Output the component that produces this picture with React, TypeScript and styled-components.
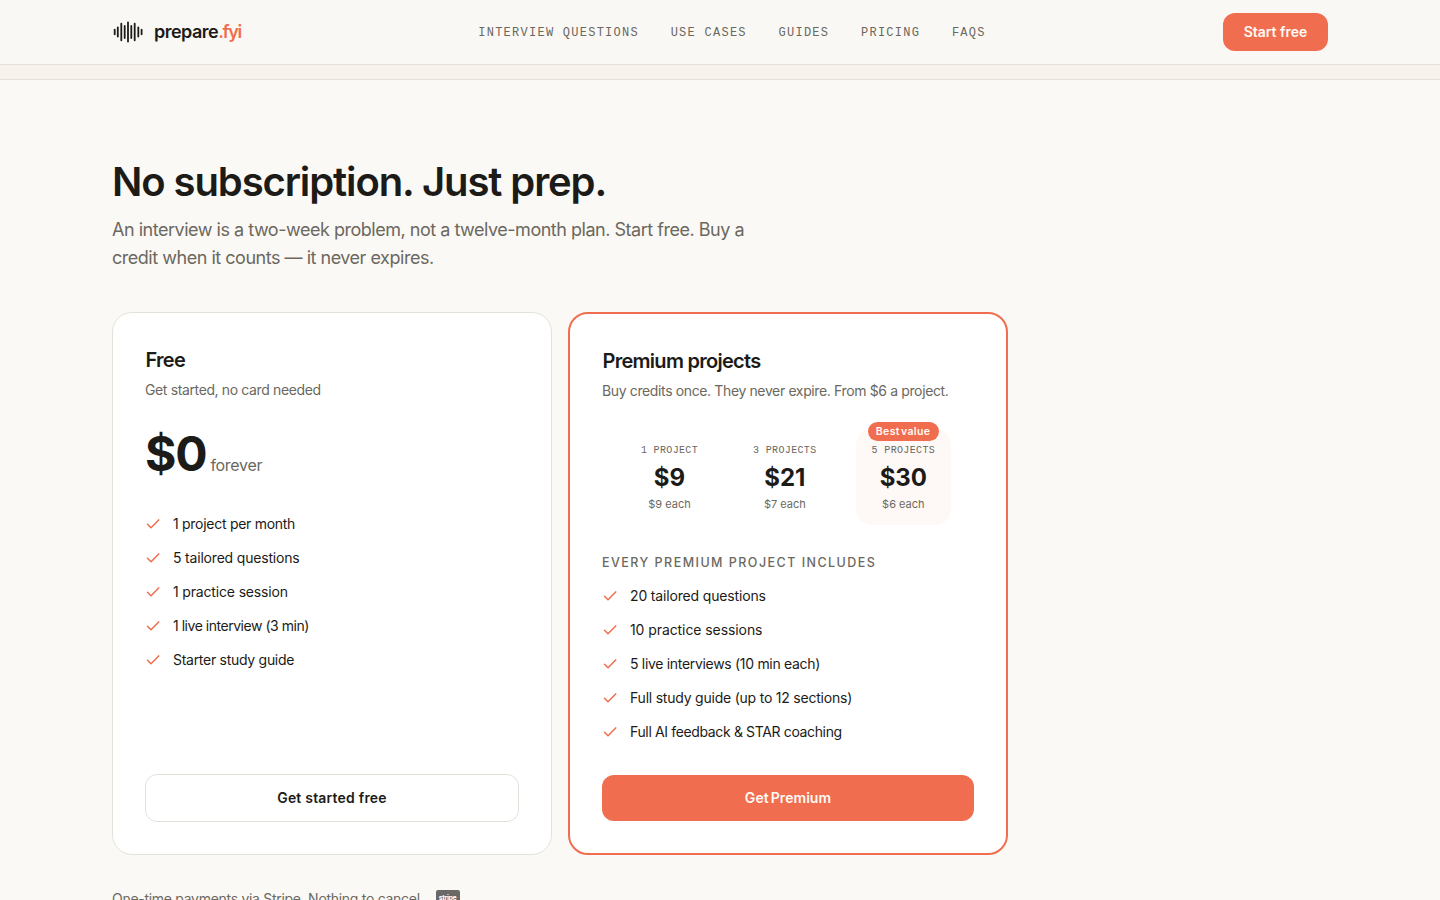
import React from "react";
import styled, { createGlobalStyle } from "styled-components";

const coral = "#f06e4f";
const ink = "#1c1b18";
const muted = "#6b6860";
const line = "#e3e2da";

const GlobalStyle = createGlobalStyle`
  * { box-sizing: border-box; }
  html, body { margin: 0; height: 900px; overflow: hidden; }
  body { background: #fbf9f5; color: ${ink}; font-family: Inter, "Liberation Sans", sans-serif; }
  h1, h2, p, ul { margin: 0; padding: 0; }
  button { font-family: inherit; margin: 0; padding: 0; }
`;

const Header = styled.header`
  height: 65px;
  border-bottom: 1px solid ${line};
  background: #faf8f4;
  padding: 0 112px;
  display: flex;
  justify-content: space-between;
  align-items: center;
`;
const Brand = styled.a`
  display: flex;
  align-items: center;
  gap: 10px;
`;
const BrandName = styled.span`
  font-size: 18px;
  font-weight: 600;
  line-height: 28px;
  letter-spacing: -0.52px;
  white-space: nowrap;
  em { font-style: normal; letter-spacing: -1.3px; color: ${coral}; }
`;
const Nav = styled.nav`
  display: flex;
  gap: 31.7px;
  padding-top: 2px;
`;
const NavLink = styled.a`
  font-family: "Liberation Mono", monospace;
  font-size: 12px;
  line-height: 16px;
  letter-spacing: 1.26px;
  color: ${muted};
  white-space: nowrap;
`;
const StartButton = styled.button`
  width: 105px;
  height: 38px;
  border: 0;
  border-radius: 12px;
  background: ${coral};
  color: #fffaf5;
  font-size: 14px;
  font-weight: 600;
  padding-bottom: 2px;
`;
const Strip = styled.div`
  height: 15px;
  border-bottom: 1px solid ${line};
  background: #f7f3ec;
`;
const Main = styled.main`
  padding: 78px 112px 0;
`;
const Title = styled.h1`
  font-size: 40px;
  font-weight: 600;
  line-height: 48px;
  letter-spacing: -1.1px;
`;
const Lead = styled.p`
  width: 672px;
  margin-top: 10px;
  font-size: 18px;
  line-height: 28px;
  letter-spacing: -0.48px;
  color: ${muted};
`;
const Plans = styled.section`
  width: 896px;
  margin-top: 40px;
  display: grid;
  grid-template-columns: 1fr 1fr;
  gap: 16px;
`;
const Card = styled.article<{ $featured?: boolean }>`
  height: 543px;
  border: ${(p) => (p.$featured ? `2px solid ${coral}` : `1px solid ${line}`)};
  border-radius: 20px;
  background: #fff;
  padding: 32px;
  display: flex;
  flex-direction: column;
`;
const PlanName = styled.h2`
  font-size: 20px;
  font-weight: 600;
  line-height: 30px;
  letter-spacing: -0.72px;
  padding-left: 0.5px;
`;
const PlanNote = styled.p`
  margin-top: 5px;
  font-size: 14px;
  line-height: 20px;
  letter-spacing: -0.37px;
  color: ${muted};
  white-space: nowrap;
`;
const Price = styled.div`
  margin-top: 28px;
  height: 52px;
  display: flex;
  align-items: baseline;
  gap: 4px;
  strong { font-size: 48px; font-weight: 700; line-height: 52px; letter-spacing: -1.2px; }
  span { font-size: 16px; letter-spacing: -0.3px; color: ${muted}; margin-bottom: 1px; }
`;
const Packs = styled.div`
  margin-top: 28px;
  display: flex;
  justify-content: center;
  gap: 23px;
`;
const Pack = styled.div<{ $best?: boolean }>`
  position: relative;
  height: 96px;
  border-radius: 16px;
  background: ${(p) => (p.$best ? "#fef8f6" : "transparent")};
  padding: 14px 16px 0;
  display: flex;
  flex-direction: column;
  align-items: center;
`;
const PackSize = styled.span`
  font-family: "Liberation Mono", monospace;
  font-size: 10px;
  line-height: 16px;
  letter-spacing: 0.35px;
  color: ${muted};
  white-space: nowrap;
`;
const PackPrice = styled.strong`
  margin-top: 3px;
  font-size: 24px;
  line-height: 32px;
  font-weight: 700;
`;
const PackEach = styled.span`
  margin-top: 2px;
  font-size: 11px;
  line-height: 16px;
  color: ${muted};
`;
const BestBadge = styled.span`
  position: absolute;
  top: -7px;
  left: 12px;
  width: 71px;
  height: 19px;
  border-radius: 10px;
  background: ${coral};
  color: #fffaf5;
  font-size: 10.5px;
  font-weight: 600;
  line-height: 19px;
  letter-spacing: 0.4px;
  word-spacing: -2px;
  text-align: center;
  white-space: nowrap;
`;
const IncludesLabel = styled.p`
  margin-top: 28px;
  font-size: 12.5px;
  font-weight: 500;
  line-height: 20px;
  letter-spacing: 1.47px;
  color: ${muted};
  white-space: nowrap;
`;
const Features = styled.ul<{ $top: number }>`
  list-style: none;
  margin-top: ${(p) => p.$top}px;
  display: grid;
  gap: 14px;
`;
const Feature = styled.li<{ $tracking: number }>`
  display: flex;
  align-items: center;
  gap: 12px;
  height: 20px;
  font-size: 14px;
  line-height: 20px;
  letter-spacing: ${(p) => p.$tracking}px;
  white-space: nowrap;
`;
const PlanButton = styled.button<{ $solid?: boolean }>`
  margin-top: auto;
  height: ${(p) => (p.$solid ? 46 : 48)}px;
  border: ${(p) => (p.$solid ? "0" : `1px solid ${line}`)};
  border-radius: 12px;
  background: ${(p) => (p.$solid ? coral : "#fff")};
  color: ${(p) => (p.$solid ? "#fffaf5" : ink)};
  font-size: 14px;
  font-weight: 600;
  letter-spacing: ${(p) => (p.$solid ? 0.05 : 0.2)}px;
  word-spacing: ${(p) => (p.$solid ? -1.5 : 0)}px;
  padding-bottom: 2px;
`;
const Footnote = styled.p`
  margin-top: 33px;
  display: flex;
  align-items: center;
  gap: 12px;
  font-size: 14px;
  line-height: 22px;
  letter-spacing: -0.29px;
  color: ${muted};
`;
const StripeMark = styled.span`
  width: 24px;
  height: 18px;
  border-radius: 2px;
  background: #6b6868;
  color: #fff;
  font-size: 7px;
  font-weight: 700;
  line-height: 16px;
  letter-spacing: -0.4px;
  text-align: center;
`;

const bars = [
  [2.7, 4.5], [5.8, 9], [9.3, 16.5], [12.7, 12], [16, 19],
  [19.3, 12], [22.7, 16.5], [26.3, 9], [29.6, 4.5],
];

const Waveform = () => (
  <svg width="32" height="24" viewBox="0 0 32 24" stroke={ink} strokeWidth="1.8" strokeLinecap="round">
    {bars.map(([x, h]) => (
      <line key={x} x1={x} x2={x} y1={12 - h / 2} y2={12 + h / 2} />
    ))}
  </svg>
);

const Check = () => (
  <svg width="16" height="16" viewBox="0 0 16 16" fill="none" stroke={coral} strokeWidth="1.5" strokeLinecap="round" strokeLinejoin="round">
    <path d="M2.5 8.3L6 11.8L13.7 3.9" />
  </svg>
);

type Item = [label: string, tracking: number];

const FeatureList = ({ items, top }: { items: Item[]; top: number }) => (
  <Features $top={top}>
    {items.map(([label, tracking]) => (
      <Feature key={label} $tracking={tracking}>
        <Check />
        {label}
      </Feature>
    ))}
  </Features>
);

const navItems = ["INTERVIEW QUESTIONS", "USE CASES", "GUIDES", "PRICING", "FAQS"];
const freeFeatures: Item[] = [
  ["1 project per month", -0.28],
  ["5 tailored questions", -0.19],
  ["1 practice session", -0.16],
  ["1 live interview (3 min)", -0.47],
  ["Starter study guide", -0.28],
];
const premiumFeatures: Item[] = [
  ["20 tailored questions", -0.16],
  ["10 practice sessions", -0.08],
  ["5 live interviews (10 min each)", -0.31],
  ["Full study guide (up to 12 sections)", -0.22],
  ["Full AI feedback & STAR coaching", -0.36],
];
const packs = [
  { size: "1 PROJECT", price: "$9", each: "$9 each" },
  { size: "3 PROJECTS", price: "$21", each: "$7 each" },
  { size: "5 PROJECTS", price: "$30", each: "$6 each", best: true },
];

export default function App() {
  return (
    <>
      <GlobalStyle />
      <Header>
        <Brand>
          <Waveform />
          <BrandName>prepare<em>.fyi</em></BrandName>
        </Brand>
        <Nav>{navItems.map((n) => <NavLink key={n}>{n}</NavLink>)}</Nav>
        <StartButton>Start free</StartButton>
      </Header>
      <Strip />
      <Main>
        <Title>No subscription. Just prep.</Title>
        <Lead>
          An interview is a two-week problem, not a twelve-month plan. Start free. Buy a<br />
          credit when it counts — it never expires.
        </Lead>
        <Plans>
          <Card>
            <PlanName>Free</PlanName>
            <PlanNote>Get started, no card needed</PlanNote>
            <Price><strong>$0</strong><span>forever</span></Price>
            <FeatureList top={34} items={freeFeatures} />
            <PlanButton>Get started free</PlanButton>
          </Card>
          <Card $featured>
            <PlanName>Premium projects</PlanName>
            <PlanNote>Buy credits once. They never expire. From $6 a project.</PlanNote>
            <Packs>
              {packs.map((p) => (
                <Pack key={p.size} $best={p.best}>
                  {p.best && <BestBadge>Best value</BestBadge>}
                  <PackSize>{p.size}</PackSize>
                  <PackPrice>{p.price}</PackPrice>
                  <PackEach>{p.each}</PackEach>
                </Pack>
              ))}
            </Packs>
            <IncludesLabel>EVERY PREMIUM PROJECT INCLUDES</IncludesLabel>
            <FeatureList top={13} items={premiumFeatures} />
            <PlanButton $solid>Get Premium</PlanButton>
          </Card>
        </Plans>
        <Footnote>One-time payments via Stripe. Nothing to cancel.<StripeMark>stripe</StripeMark></Footnote>
      </Main>
    </>
  );
}
